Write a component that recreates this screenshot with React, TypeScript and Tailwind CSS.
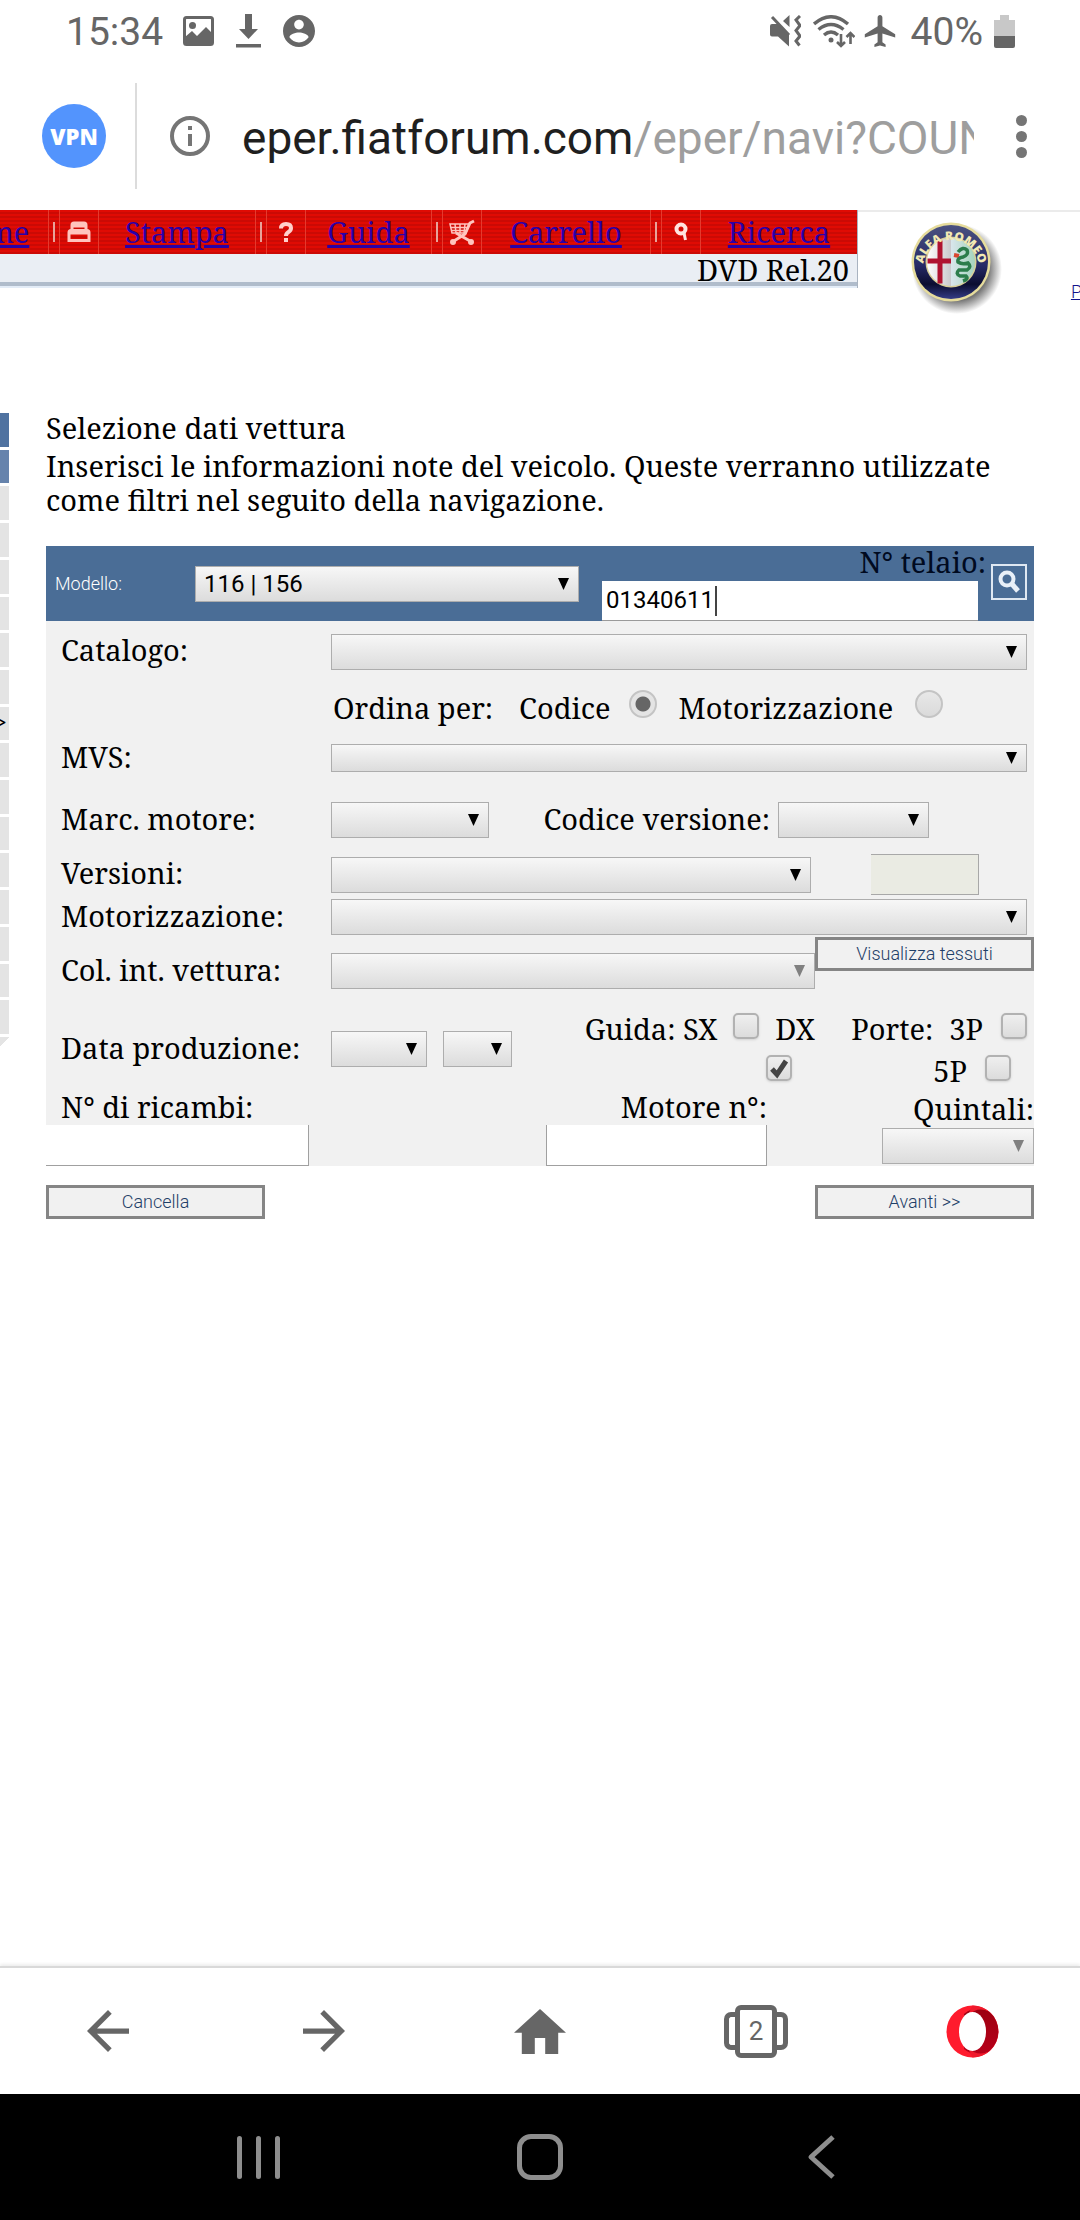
import type { ReactNode } from 'react';
import clsx from 'clsx';

const STRIPES = 'bg-[repeating-linear-gradient(#e00b04_0_2px,#cb0a05_2px_4px)]';

const navItems = [
    { label: 'Stampa', width: 'w-[156px]', icon: <PrintIcon /> },
    { label: 'Guida', width: 'w-[125px]', icon: <HelpIcon /> },
    { label: 'Carrello', width: 'w-[168px]', icon: <CartIcon /> },
    { label: 'Ricerca', width: 'w-[156px]', icon: <FindIcon /> },
];

function PrintIcon() {
    return (
        <svg className="h-[22px] w-[24px]" viewBox="0 0 24 22" fill="none" stroke="#ffc4be" strokeWidth="3">
            <path d="M5 9V4q0-2 2-2h10q2 0 2 2v5M5 5h14" />
            <path d="M2 19.500v-8q0-2 2-2h16q2 0 2 2v8zM2 12h20" />
        </svg>
    );
}

function HelpIcon() {
    return (
        <svg className="h-[20px] w-[16px]" viewBox="0 0 16 20" fill="none" stroke="#ffd0cc" strokeWidth="4">
            <path d="M3 6.500q0-4.500 5-4.500t5 4q0 2.500-2.500 4T8 14" />
            <path d="M6 18h4" />
        </svg>
    );
}

function CartIcon() {
    return (
        <svg className="h-[26px] w-[28px]" viewBox="0 0 28 26" fill="none" stroke="#ffc4be" strokeWidth="2">
            <path d="M2 5h19l-3 9H4zM3 8.500h17M4 11.500h15M7 5l1 9M12 5v9M17 5l-1 9" strokeWidth="1.500" />
            <path d="M26 2l-4 2-5 11-11 7M8 14l14 8" strokeWidth="3" />
            <circle cx="5" cy="23" r="2" fill="#ffc4be" />
            <circle cx="23" cy="23" r="2" fill="#ffc4be" />
        </svg>
    );
}

function FindIcon() {
    return (
        <svg className="h-[20px] w-[16px]" viewBox="0 0 16 20" fill="none" stroke="#ffe4e0" strokeWidth="4">
            <circle cx="8" cy="7" r="4.500" />
            <path d="M11 11l1.500 7" strokeWidth="3" />
        </svg>
    );
}

function AlfaLogo() {
    return (
        <svg className="h-[96px] w-[96px] shrink-0" viewBox="0 0 96 96">
            <defs>
                <radialGradient id="shade">
                    <stop offset="70%" stopColor="#555" stopOpacity="0.8" />
                    <stop offset="100%" stopColor="#555" stopOpacity="0" />
                </radialGradient>
                <linearGradient id="ring" x1="0" x2="0" y1="0" y2="1">
                    <stop offset="0" stopColor="#4a5180" />
                    <stop offset="0.55" stopColor="#262a66" />
                    <stop offset="0.8" stopColor="#0b0d30" />
                    <stop offset="1" stopColor="#343c86" />
                </linearGradient>
                <linearGradient id="left" x1="0" x2="1">
                    <stop offset="0" stopColor="#fff" />
                    <stop offset="1" stopColor="#c9c9cc" />
                </linearGradient>
                <linearGradient id="right" x1="0" x2="1">
                    <stop offset="0" stopColor="#d9e6ec" />
                    <stop offset="1" stopColor="#a5d3bd" />
                </linearGradient>
                <path id="arc" d="M15 49A28 28 0 1 1 71 49" />
            </defs>
            <circle cx="49" cy="50" r="45" fill="url(#shade)" />
            <circle cx="43" cy="43" r="39.500" fill="#e6dc9c" />
            <circle cx="43" cy="43" r="37" fill="url(#ring)" />
            <circle cx="43" cy="43" r="25.500" fill="#d8cf98" />
            <path d="M43 19a24 24 0 0 0 0 48z" fill="url(#left)" />
            <path d="M43 19a24 24 0 0 1 0 48z" fill="url(#right)" />
            <path d="M32 21.500v43M19.500 42H43" stroke="#b01330" strokeWidth="5" />
            <path d="M46 36l5 1" stroke="#d8472f" strokeWidth="4" />
            <path
                d="M50 33q5-6 9-2 2 5-4 7-6 1-5 5 4 3 10 1 4 4-1 7l-8 0q-4 4 1 6l6 0q3 3-3 5"
                fill="none"
                stroke="#2c7d4c"
                strokeWidth="3.500"
            />
            <text className="font-['Open_Sans',sans-serif] font-extrabold" fontSize="12" fill="#f2e9b4">
                <textPath href="#arc" startOffset="50%" textAnchor="middle">ALFA ROMEO</textPath>
            </text>
        </svg>
    );
}

function StatusBar() {
    return (
        <div className="flex h-[62px] items-center justify-between pr-[65px] pl-[66px] text-[39px] text-[#666]">
            <div className="flex items-center">
                <span className="pt-[3px]">15:34</span>
                <svg className="ml-5 h-[30px] w-[31px]" viewBox="0 0 31 30" fill="#666">
                    <rect x="1.500" y="1.500" width="28" height="27" rx="2" fill="none" stroke="#666" strokeWidth="3" />
                    <circle cx="9.500" cy="9.500" r="3.500" />
                    <path d="M2 21l7-6 5 5 9-9 7 7v11H2z" />
                </svg>
                <svg className="ml-[22px] h-[34px] w-[25px]" viewBox="0 0 25 34" fill="#666">
                    <path d="M9 0h7v15h6l-9.500 10L3 15h6zM0 30h25v3.500H0z" />
                </svg>
                <svg className="ml-[22px] h-[32px] w-[32px]" viewBox="2 2 20 20" fill="#666">
                    <path d="M12 2C6.480 2 2 6.480 2 12s4.480 10 10 10 10-4.480 10-10S17.520 2 12 2zm0 3c1.660 0 3 1.340 3 3s-1.340 3-3 3-3-1.340-3-3 1.340-3 3-3zm0 14.200c-2.500 0-4.710-1.280-6-3.220.03-1.990 4-3.080 6-3.080 1.990 0 5.970 1.090 6 3.080-1.290 1.940-3.500 3.220-6 3.220z" />
                </svg>
            </div>
            <div className="flex items-center">
                <svg className="h-[32px] w-[31px]" viewBox="0 0 31 32" fill="#666">
                    <path d="M2 9h7l10 10v12.500L8 21.500H2q-2 0-2-2V11q0-2 2-2zM19.500 0v12L13 6z" />
                    <path d="M2 2l17 18" stroke="#666" strokeWidth="3" />
                    <path d="M30 1l-4 4 4 5.500-4 5 4 5.500-4 5 3.500 4.500" fill="none" stroke="#666" strokeWidth="3" />
                </svg>
                <svg className="ml-3 h-[33px] w-[42px]" viewBox="0 0 42 33" fill="none" stroke="#666" strokeWidth="3.400">
                    <path d="M1 9q17-14.500 34 0M5.500 14.500q12.500-10 25 0M11 20q7-6 14 0" />
                    <circle cx="18" cy="25" r="2.500" fill="#666" stroke="none" />
                    <path d="M28 19v12M24 27l4 4 4-4M37.500 29V18M33.500 22l4-4 4 4" strokeWidth="2.600" />
                </svg>
                <svg className="ml-[9px] h-[32px] w-[32px]" viewBox="2 2 19 20" fill="#666">
                    <path d="M21 16v-2l-8-5V3.500c0-.83-.67-1.500-1.500-1.500S10 2.670 10 3.500V9l-8 5v2l8-2.500V19l-2 1.500V22l3.500-1 3.500 1v-1.500L13 19v-5.500l8 2.500z" />
                </svg>
                <span className="ml-[15px] pt-[3px]">40%</span>
                <svg className="ml-[11px] h-[33px] w-[21px]" viewBox="0 0 21 33">
                    <path d="M6 0h9v5h6v17H0V5h6z" fill="#c8c8c8" />
                    <path d="M0 21h21v10q0 2-2 2H2q-2 0-2-2z" fill="#666" />
                </svg>
            </div>
        </div>
    );
}

function AddressBar() {
    return (
        <div className="flex h-[148px] items-center pr-[53px] pl-[42px]">
            <button className="h-[64px] w-[64px] rounded-full bg-[#5394fd] font-['Open_Sans',sans-serif] text-[22px] font-extrabold text-white">
                VPN
            </button>
            <div className="ml-[29px] h-[106px] w-[2px] bg-[#dcdcdc]" />
            <svg className="ml-[33px] h-[40px] w-[40px] shrink-0" viewBox="0 0 40 40">
                <circle cx="20" cy="20" r="18" fill="none" stroke="#757575" strokeWidth="4" />
                <path d="M18 10h4v4h-4zM18 18h4v12h-4z" fill="#757575" />
            </svg>
            <div className="ml-8 min-w-0 flex-1 overflow-hidden pt-[5px] text-[46px] whitespace-nowrap text-[#1f1f1f]">
                eper.fiatforum.com<span className="text-[#9e9e9e]">/eper/navi?COUN</span>
            </div>
            <button aria-label="Menu" className="ml-[42px] flex flex-col gap-[5px]">
                <i className="h-[11px] w-[11px] rounded-full bg-[#757575]" />
                <i className="h-[11px] w-[11px] rounded-full bg-[#757575]" />
                <i className="h-[11px] w-[11px] rounded-full bg-[#757575]" />
            </button>
        </div>
    );
}

function SiteHeader() {
    return (
        <header className="flex">
            <div className="min-w-0 flex-1 border-r border-[#a9b3c0]">
                <nav className={clsx('flex h-[44px] justify-end overflow-hidden', STRIPES)}>
                    <a href="#home" className="w-[120px] shrink-0 text-center leading-[44px] text-[#2a00a8] underline decoration-[3px]">
                        Home
                    </a>
                    {navItems.map((item) => (
                        <div key={item.label} className="flex shrink-0 items-center">
                            <span className="flex h-full w-[12px] items-center justify-center border-x border-[#e53a2e]">
                                <i className="h-[20px] w-[2px] bg-[#e8a39a]" />
                            </span>
                            <span className="flex h-full w-[39px] items-center justify-center border-r border-[#e53a2e]">
                                {item.icon}
                            </span>
                            <a
                                href={'#' + item.label.toLowerCase()}
                                className={clsx('text-center leading-[44px] text-[#2a00a8] underline decoration-[3px]', item.width)}
                            >
                                {item.label}
                            </a>
                        </div>
                    ))}
                </nav>
                <div className="flex h-[34px] flex-col border-b-2 border-[#e3ecf7] bg-[#eaeef4] text-right">
                    <p className="h-[32px] border-b-4 border-[#b0bccb] pr-2 leading-[32px]">DVD Rel.20</p>
                </div>
            </div>
            <div className="flex h-[78px] w-[222px] items-start border-t-2 border-[#ebebeb] pt-[7px] pl-[50px]">
                <AlfaLogo />
                <a href="#portale" className="-mr-0.5 mt-[61px] ml-auto font-[Roboto] text-[18px] leading-6 font-light text-[#12128a] underline">
                    P
                </a>
            </div>
        </header>
    );
}

function SideMenu() {
    return (
        <aside className="mt-[125px] flex h-[634px] w-[9px] shrink-0 flex-col gap-[3px] overflow-hidden">
            {Array.from({ length: 17 }, (_, i) => (
                <div
                    key={i}
                    className={clsx(
                        'flex flex-1 items-center justify-end pr-[2px] pb-[3px] text-[24px] leading-6',
                        i === 0 && 'bg-[#4f72a0]',
                        i === 1 && 'bg-[#6683ac]',
                        i > 1 && 'bg-[#e4e4e4]',
                    )}
                >
                    {i === 8 && '>'}
                </div>
            ))}
            <div className="h-[10px] bg-[linear-gradient(135deg,#e4e4e4_50%,#fff_50%)]" />
        </aside>
    );
}

type SelectProps = { id: string; className?: string; disabled?: boolean; children?: ReactNode; label?: string };

function Select({ id, className, disabled, children, label }: SelectProps) {
    return (
        <span className={clsx('relative flex', className)}>
            <select
                id={id}
                aria-label={label}
                disabled={disabled}
                className="h-full w-full appearance-none border border-[#adadad] bg-linear-to-b from-[#f7f7f7] to-[#dcdcdc] pl-2 font-[Roboto] text-[24px] leading-7 text-black"
            >
                {children}
            </select>
            <svg className="pointer-events-none absolute top-1/2 right-[10px] h-[12px] w-[11px] -translate-y-1/2" viewBox="0 0 11 12">
                <path d="M0 0h11L5.500 12z" fill={disabled ? '#808080' : '#000'} />
            </svg>
        </span>
    );
}

function Radio({ id, checked }: { id: string; checked?: boolean }) {
    return (
        <input
            id={id}
            type="radio"
            name="ordina"
            defaultChecked={checked}
            className="mb-2 h-[28px] w-[28px] appearance-none rounded-full border-2 border-[#c4c4c4] bg-linear-to-b from-[#e8e8e8] to-[#dadada] checked:bg-[radial-gradient(circle,#666_0_7px,#e4e4e4_8px)]"
        />
    );
}

function Checkbox({ id, checked, className }: { id: string; checked?: boolean; className?: string }) {
    return (
        <span className={clsx('relative mb-1 flex', className)}>
            <input
                id={id}
                type="checkbox"
                defaultChecked={checked}
                className="peer h-[26px] w-[26px] appearance-none rounded-[5px] border-2 border-[#b2b2b2] bg-linear-to-b from-[#efefef] to-[#dcdcdc] shadow-sm"
            />
            <svg className="pointer-events-none absolute inset-0 hidden h-[26px] w-[26px] peer-checked:block" viewBox="0 0 26 26">
                <path d="M6 14l5 5.500L20 6" fill="none" stroke="#444" strokeWidth="5" />
            </svg>
        </span>
    );
}

function Row({ id, label, className, children }: { id?: string; label?: string; className?: string; children: ReactNode }) {
    return (
        <div className={clsx('flex items-center', className)}>
            <label htmlFor={id} className="w-[285px] shrink-0 pb-1 pl-[15px]">
                {label}
            </label>
            {children}
        </div>
    );
}

const actionButton =
    'h-[34px] w-[219px] border-[3px] border-[#858585] bg-[#f1f1f1] font-[Roboto] text-[18px] leading-6 font-light text-[#1f4068]';

function VehicleForm() {
    return (
        <form className="mt-[29px]">
            <div className="flex h-[75px] items-center bg-[#4a6d96]">
                <label htmlFor="modello" className="w-[149px] shrink-0 pl-[9px] font-[Roboto] text-[18px] font-light text-white">
                    Modello:
                </label>
                <Select id="modello" className="h-[36px] flex-1">
                    <option>116 | 156</option>
                </Select>
                <div className="ml-[23px] flex w-[376px] flex-col self-stretch">
                    <label htmlFor="telaio" className="-mr-2 h-[35px] text-right leading-[32px] text-[#000a20]">
                        N° telaio:
                    </label>
                    <span className="relative flex h-[40px]">
                        <input
                            id="telaio"
                            defaultValue="01340611"
                            className="w-full border-b border-[#9a9a9a] bg-white pl-1 font-[Roboto] text-[24px] text-black outline-none"
                        />
                        <i className="absolute top-[5px] left-[113px] h-[30px] w-[2px] bg-[#444]" />
                    </span>
                </div>
                <button type="button" aria-label="Cerca" className="mr-[7px] ml-[13px] mb-1 flex h-[36px] w-[36px] items-center justify-center border-2 border-[#dfe8f2]">
                    <svg className="h-[24px] w-[24px]" viewBox="0 0 24 24" fill="none" stroke="#e9f0f8">
                        <circle cx="10" cy="9" r="6.500" strokeWidth="4" />
                        <path d="M15 14l6 7" strokeWidth="5" />
                    </svg>
                </button>
            </div>

            <div className="bg-[#f1f1f1]">
                <Row id="catalogo" label="Catalogo:" className="h-[61px] pr-[7px]">
                    <Select id="catalogo" className="h-[36px] flex-1" />
                </Row>
                <Row className="h-[52px]">
                    <span className="pb-[2px] pl-[2px]">Ordina per:</span>
                    <label htmlFor="codice" className="mr-[18px] ml-[26px] pb-[2px]">Codice</label>
                    <Radio id="codice" checked />
                    <label htmlFor="motor" className="mr-[22px] ml-[22px] pb-[2px]">Motorizzazione</label>
                    <Radio id="motor" />
                </Row>
                <Row id="mvs" label="MVS:" className="h-[48px] pr-[7px]">
                    <Select id="mvs" className="h-[28px] flex-1" />
                </Row>
                <Row id="marc" label="Marc. motore:" className="h-[68px] pt-2 pr-[105px]">
                    <Select id="marc" className="h-[36px] w-[158px]" />
                    <label htmlFor="versione" className="mr-2 ml-auto pb-1">Codice versione:</label>
                    <Select id="versione" className="h-[36px] w-[151px]" />
                </Row>
                <Row id="versioni" label="Versioni:" className="h-[49px] pr-[55px]">
                    <Select id="versioni" className="h-[36px] flex-1" />
                    <input aria-label="Versione" readOnly className="ml-[60px] h-[41px] w-[108px] border border-l-0 border-[#a8a8a8] bg-[#eaebe3]" />
                </Row>
                <Row id="motorizzazione" label="Motorizzazione:" className="h-[36px] pr-[7px]">
                    <Select id="motorizzazione" className="h-[36px] flex-1" />
                </Row>
                <Row id="colore" label="Col. int. vettura:" className="h-[72px]">
                    <Select id="colore" className="h-[36px] flex-1" disabled />
                    <button type="button" className={clsx(actionButton, 'mt-[2px] self-start')}>Visualizza tessuti</button>
                </Row>
                <Row id="mese" label="Data produzione:">
                    <Select id="mese" className="h-[36px] w-[96px]" />
                    <Select id="anno" label="Anno" className="ml-4 h-[36px] w-[69px]" />
                    <div className="flex-1">
                        <div className="flex h-[42px] items-center justify-end">
                            <label htmlFor="sx">Guida: SX</label>
                            <Checkbox id="sx" className="mr-4 ml-4" />
                            <label htmlFor="dx">DX</label>
                        </div>
                        <div className="flex h-[42px] items-center justify-end pr-[23px]">
                            <Checkbox id="dx" checked />
                        </div>
                    </div>
                    <div className="w-[219px]">
                        <div className="flex h-[42px] items-center justify-end pr-[7px]">
                            <span className="mr-4">Porte:</span>
                            <label htmlFor="p3">3P</label>
                            <Checkbox id="p3" className="ml-[18px]" />
                        </div>
                        <div className="flex h-[42px] items-center justify-end pr-[23px]">
                            <label htmlFor="p5">5P</label>
                            <Checkbox id="p5" className="ml-[18px]" />
                        </div>
                    </div>
                </Row>
                <div className="flex h-[75px]">
                    <div className="w-[263px]">
                        <label htmlFor="ricambi" className="block h-[34px] pl-[15px] leading-[32px]">N° di ricambi:</label>
                        <input id="ricambi" className="h-[41px] w-full border-r border-b border-[#a0a0a0] bg-white" />
                    </div>
                    <div className="ml-auto w-[221px]">
                        <label htmlFor="motore" className="block h-[34px] text-right leading-[32px]">Motore n°:</label>
                        <input id="motore" className="h-[41px] w-full border-x border-b border-[#a0a0a0] bg-white" />
                    </div>
                    <div className="ml-[115px] w-[152px]">
                        <label htmlFor="quintali" className="block h-[37px] text-right leading-[36px]">Quintali:</label>
                        <Select id="quintali" className="h-[36px]" disabled />
                    </div>
                </div>
            </div>

            <div className="mt-[19px] flex justify-between">
                <button type="reset" className={actionButton}>Cancella</button>
                <button type="button" className={actionButton}>Avanti &gt;&gt;</button>
            </div>
        </form>
    );
}

function BrowserToolbar() {
    return (
        <div className="flex h-[128px] items-center border-t-2 border-[#d9d9d9] bg-white text-[#666] shadow-[0_-2px_3px_#eee]">
            <button aria-label="Indietro" className="flex flex-1 justify-center">
                <svg className="h-[42px] w-[42px]" viewBox="4 4 16 16" fill="currentColor">
                    <path d="M20 11H7.830l5.590-5.590L12 4l-8 8 8 8 1.410-1.410L7.830 13H20v-2z" />
                </svg>
            </button>
            <button aria-label="Avanti" className="flex flex-1 justify-center">
                <svg className="h-[42px] w-[42px]" viewBox="4 4 16 16" fill="currentColor">
                    <path d="M12 4l-1.410 1.410L16.170 11H4v2h12.170l-5.580 5.590L12 20l8-8z" />
                </svg>
            </button>
            <button aria-label="Home" className="flex flex-1 justify-center">
                <svg className="h-[45px] w-[52px]" viewBox="2 3 20 17" fill="currentColor" preserveAspectRatio="none">
                    <path d="M10 20v-6h4v6h5v-8h3L12 3 2 12h3v8z" />
                </svg>
            </button>
            <button aria-label="Schede" className="flex flex-1 items-center justify-center">
                <span className="h-[38px] w-[11px] rounded-l-[7px] border-[5px] border-r-0 border-[#666]" />
                <span className="flex h-[53px] w-[42px] items-center justify-center rounded-[6px] border-[5px] border-[#666] text-[26px] leading-8">
                    2
                </span>
                <span className="h-[38px] w-[11px] rounded-r-[7px] border-[5px] border-l-0 border-[#666]" />
            </button>
            <button aria-label="Opera" className="flex flex-1 justify-center">
                <svg className="h-[53px] w-[53px]" viewBox="0 0 53 53">
                    <defs>
                        <linearGradient id="opera" x1="0" x2="0" y1="0" y2="1">
                            <stop offset="0" stopColor="#9c0010" />
                            <stop offset="1" stopColor="#b8001a" />
                        </linearGradient>
                    </defs>
                    <circle cx="26.500" cy="26.500" r="26" fill="#ff1b2d" />
                    <path d="M18 9Q30-1 43 6.500A26 26 0 0 1 43 46.500Q30 54 18 44z" fill="url(#opera)" />
                    <path d="M26.500.5A26 26 0 0 1 43 6.500Q32 1 22 10zM26.500 52.500A26 26 0 0 0 43 46.500Q32 52 22 43z" fill="#f01a2c" />
                    <ellipse cx="26.500" cy="26.500" rx="13.500" ry="19.500" fill="#fff" />
                </svg>
            </button>
        </div>
    );
}

function SystemNav() {
    return (
        <div className="flex h-[126px] items-center bg-black px-[118px] text-[#8e8e8e]">
            <button aria-label="Recenti" className="flex flex-1 justify-center gap-[14px]">
                <i className="h-[43px] w-[5px] rounded-full bg-current" />
                <i className="h-[43px] w-[5px] rounded-full bg-current" />
                <i className="h-[43px] w-[5px] rounded-full bg-current" />
            </button>
            <button aria-label="Home" className="flex flex-1 justify-center">
                <span className="h-[46px] w-[46px] rounded-[14px] border-[5px] border-current" />
            </button>
            <button aria-label="Indietro" className="flex flex-1 justify-center">
                <svg className="h-[44px] w-[28px]" viewBox="0 0 28 44" fill="none" stroke="currentColor" strokeWidth="5" strokeLinejoin="round">
                    <path d="M26 2L4 22l22 20" />
                </svg>
            </button>
        </div>
    );
}

export default function App() {
    return (
        <div className="flex min-h-screen flex-col overflow-x-hidden bg-white font-[Roboto,sans-serif]">
            <StatusBar />
            <AddressBar />
            <div className="flex-1 font-['Noto_Serif','DejaVu_Serif',serif] text-[29px] leading-[35px] text-black">
                <SiteHeader />
                <div className="flex items-start">
                    <SideMenu />
                    <main className="flex-1 pt-[123px] pr-[46px] pl-[37px]">
                        <h1 className="mb-1 leading-[34px]">Selezione dati vettura</h1>
                        <p className="leading-[34px]">
                            Inserisci le informazioni note del veicolo. Queste verranno utilizzate come filtri nel seguito della
                            navigazione.
                        </p>
                        <VehicleForm />
                    </main>
                </div>
            </div>
            <BrowserToolbar />
            <SystemNav />
        </div>
    );
}
